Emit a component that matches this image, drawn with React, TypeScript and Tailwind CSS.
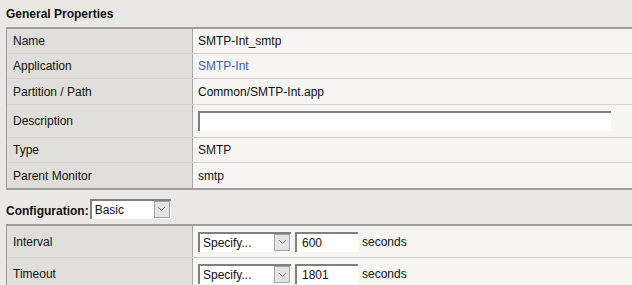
import React from 'react';

const Chevron = () => (
  <svg width="9" height="6" viewBox="0 0 9 6" className="block">
    <polyline points="1,1 4.5,4.5 8,1" fill="none" stroke="#7a7a7a" strokeWidth="1" />
  </svg>
);

const Select = ({ value, width }: { value: string; width: string }) => (
  <div className={`flex h-[20px] items-stretch border-l-2 border-t-2 border-[#7f7f7f] bg-white ${width}`}>
    <span className="flex flex-1 items-center pl-[3px] text-[#111]">{value}</span>
    <span className="mb-[1px] mr-[1px] flex w-[16px] items-center justify-center border border-[#a3a3a3] bg-[#e3e3e3]">
      <Chevron />
    </span>
  </div>
);

const Row = ({
  label,
  h,
  last,
  children,
}: {
  label: string;
  h: string;
  last?: boolean;
  children: React.ReactNode;
}) => (
  <div className={`flex ${h} ${last ? '' : 'border-b border-[#d3d2ce]'}`}>
    <div className="flex w-[186px] shrink-0 items-center border-r border-[#a8a8a8] bg-[#dfdeda] pl-[6px] text-[#111]">
      {label}
    </div>
    <div className="flex flex-1 items-center bg-[#f6f5f3] pl-[5px] text-[#111]">{children}</div>
  </div>
);

const App = () => {
  return (
    <div
      className="h-[285px] w-[632px] overflow-hidden bg-[#e9e8e4] text-[12px]"
      style={{ fontFamily: '"Liberation Sans", Arial, sans-serif' }}
    >
      {/* General Properties */}
      <div className="flex h-[27px] items-end pb-[4px] pl-[6px] font-bold text-[#111]">General Properties</div>
      <div className="ml-[6px] border-b-2 border-l border-t-2 border-[#9d9d9d]">
        <Row label="Name" h="h-[25px]">SMTP-Int_smtp</Row>
        <Row label="Application" h="h-[25px]">
          <span className="text-[#3c64b4]">SMTP-Int</span>
        </Row>
        <Row label="Partition / Path" h="h-[26px]">Common/SMTP-Int.app</Row>
        <Row label="Description" h="h-[33px]">
          <div className="h-[20px] w-[413px] border-l-2 border-t-2 border-[#7f7f7f] bg-white" />
        </Row>
        <Row label="Type" h="h-[25px]">SMTP</Row>
        <Row label="Parent Monitor" h="h-[25px]" last>
          smtp
        </Row>
      </div>

      {/* Configuration */}
      <div className="flex h-[34px] items-center gap-[1px] pl-[6px] pt-[3px]">
        <span className="pt-[4px] font-bold text-[#111]">Configuration:</span>
        <Select value="Basic" width="w-[81px]" />
      </div>
      <div className="ml-[6px] border-l border-t-2 border-[#9d9d9d]">
        <Row label="Interval" h="h-[32px]">
          <div className="flex items-center gap-[4px]">
            <Select value="Specify..." width="w-[93px]" />
            <div className="flex h-[20px] w-[63px] items-center border-l-2 border-t-2 border-[#7f7f7f] bg-white pl-[5px]">600</div>
            <span>seconds</span>
          </div>
        </Row>
        <Row label="Timeout" h="h-[32px]" last>
          <div className="flex items-center gap-[4px]">
            <Select value="Specify..." width="w-[93px]" />
            <div className="flex h-[20px] w-[63px] items-center border-l-2 border-t-2 border-[#7f7f7f] bg-white pl-[5px]">1801</div>
            <span>seconds</span>
          </div>
        </Row>
      </div>
    </div>
  );
};

export default App;
